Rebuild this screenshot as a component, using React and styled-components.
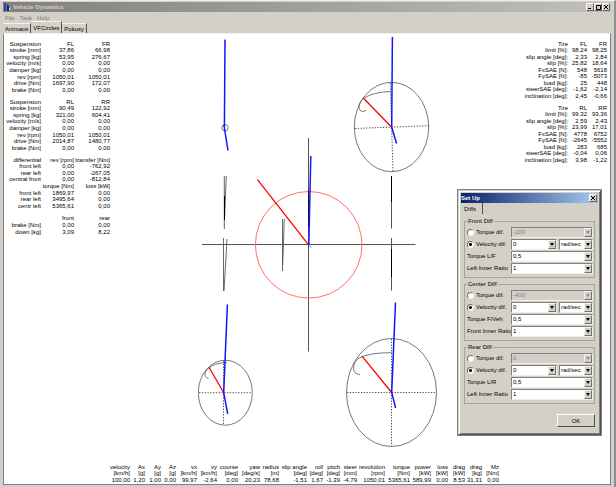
import React, { useId } from "react";
import styled, { createGlobalStyle } from "styled-components";

const FACE = "#d4d0c8";

const GlobalStyle = createGlobalStyle`
  * { box-sizing: border-box; }
  body {
    margin: 0;
    background: ${FACE};
    font-family: "Liberation Sans", Arial, sans-serif;
    font-size: 6px;
    line-height: 6px;
    color: #000;
  }
  button, input, select { font: inherit; color: inherit; margin: 0; padding: 0; }
`;

const Window = styled.div`
  position: relative;
  display: flex;
  flex-direction: column;
  min-height: 100vh;
  padding: 1px 3px 2px 3px;
  background: ${FACE};
  border-right: 2px solid #909090;
  border-top: 1px solid #f0eee8;
`;

const TitleBar = styled.header`
  display: flex;
  align-items: center;
  gap: 2px;
  height: 10px;
  padding: 0 1px;
  color: ${FACE};
  background: linear-gradient(90deg, #808080, #c0c0c0);
`;

const Title = styled.h1`
  flex: 1;
  margin: 0;
  font-size: 6px;
  font-weight: bold;
`;

const CaptionGroup = styled.div`
  display: flex;
`;

const CaptionButton = styled.button`
  display: grid;
  place-items: center;
  width: 8px;
  height: 8px;
  background: ${FACE};
  border: 1px solid;
  border-color: #fff #606060 #606060 #fff;
  svg { display: block; }
`;

const MenuBar = styled.nav`
  display: flex;
  gap: 5px;
  padding: 2px 2px 0;
  height: 9px;
`;

const MenuItem = styled.button`
  border: 0;
  background: none;
  color: #808080;
`;

const TabList = styled.div`
  display: flex;
  align-items: flex-end;
  height: 12px;
`;

const Tab = styled.button`
  height: ${(p) => (p.$active ? 12 : 10)}px;
  padding: 0 2px;
  background: ${FACE};
  border: 0;
  border-top: 1px solid #f4f2ee;
  border-right: 1px solid #505050;
`;

const Page = styled.main`
  flex: 1;
  display: grid;
  grid-template-columns: auto 1fr auto;
  grid-template-rows: 1fr auto;
  padding: 2px 3px 1px 4px;
  background: #fff;
  border: 1px solid #808080;
  border-top-color: #f4f2ee;
`;

const Column = styled.section`
  display: flex;
  flex-direction: column;
  gap: 6px;
  padding-top: 5px;
`;

const DataTable = styled.table`
  table-layout: fixed;
  border-collapse: collapse;
  width: ${(p) => p.$width}px;
  height: ${(p) => p.$height}px;
  th, td {
    padding: 0;
    font-weight: normal;
    text-align: right;
    white-space: nowrap;
    direction: rtl;
    unicode-bidi: normal;
  }
  span { direction: ltr; unicode-bidi: isolate; }
`;

const Col = styled.col`
  width: ${(p) => p.$w}px;
`;

const Drawing = styled.svg`
  display: block;
  justify-self: start;
  margin-left: 88px;
`;

const Footer = styled.footer`
  grid-column: 1 / -1;
  padding-left: 101px;
`;

const Dialog = styled.section`
  position: absolute;
  top: 189px;
  right: 13px;
  width: 143px;
  padding: 2px;
  background: ${FACE};
  border: 1px solid;
  border-color: #d4d0c8 #505050 #505050 #d4d0c8;
  box-shadow: inset 1px 1px #fff, inset -1px -1px #808080, 0 0 0 1px #808080;
`;

const DialogTitle = styled(TitleBar)`
  padding: 0 1px 0 0;
  color: #fff;
  background: linear-gradient(90deg, #0a246a, #a6caf0);
`;

const DialogTab = styled.button`
  display: block;
  height: 11px;
  width: 22px;
  padding: 0 3px;
  text-align: left;
  background: ${FACE};
  border: 0;
  border-right: 1px solid #505050;
`;

const DialogPage = styled.form`
  display: flex;
  flex-direction: column;
  gap: 3px;
  padding: 4px 3px 5px 3px;
`;

const Group = styled.fieldset`
  min-width: 0;
  margin: 0;
  padding: 1px 1px 3px 2px;
  border: 1px solid #a8a49c;
`;

const Legend = styled.legend`
  height: 7px;
  padding: 0 1px;
`;

const Row = styled.div`
  display: grid;
  grid-template-columns: 44px 1fr;
  align-items: center;
  height: 12px;
`;

const RowLabel = styled.label`
  display: flex;
  align-items: center;
  gap: 2px;
  white-space: nowrap;
`;

const Radio = styled.input`
  appearance: none;
  width: 7px;
  height: 7px;
  border: 1px solid;
  border-color: #707070 #f4f2ee #f4f2ee #707070;
  border-radius: 50%;
  background: #fff;
  &:checked { background: radial-gradient(circle, #000 1px, #fff 2px); }
`;

const Fields = styled.div`
  display: grid;
  grid-template-columns: ${(p) => (p.$split ? "46px 1fr" : "1fr")};
  gap: 2px;
`;

const ComboBox = styled.div`
  position: relative;
  height: 11px;
`;

const Select = styled.select`
  appearance: none;
  display: block;
  width: 100%;
  height: 11px;
  padding: 0 8px 0 1px;
  line-height: 8px;
  background: #fff;
  border: 1px solid;
  border-color: #808080 #f0eee8 #f0eee8 #808080;
  border-radius: 0;
  &:disabled { background: ${FACE}; color: #808080; opacity: 1; }
`;

const ComboArrow = styled.span`
  position: absolute;
  top: 1px;
  right: 1px;
  display: grid;
  place-items: center;
  width: 8px;
  height: 9px;
  background: ${FACE};
  color: ${(p) => (p.$off ? "#909090" : "#000")};
  border: 1px solid;
  border-color: #f4f2ee #707070 #707070 #f4f2ee;
  pointer-events: none;
  svg { display: block; }
`;

const OkButton = styled.button`
  align-self: flex-end;
  width: 38px;
  height: 13px;
  margin-top: 7px;
  background: ${FACE};
  border: 1px solid;
  border-color: #fff #505050 #505050 #fff;
`;

const wheelRows = ["stroke [mm]", "spring [kg]", "velocity [m/s]", "damper [kg]", "rev [rpm]", "drive [Nm]", "brake [Nm]"];
const tireRows = ["limit [%]:", "slip angle [deg]:", "slip [%]:", "FxSAE [N]:", "FySAE [N]:", "load [kg]:", "steerSAE [deg]:", "inclination [deg]:"];
const zip = (head, labels, a, b) => [head, ...labels.map((l, i) => [l, a[i], b[i]])];

const leftTables = [
  zip(["Suspension", "FL", "FR"], wheelRows,
    ["37,86", "53,95", "0,00", "0,00", "1050,01", "1697,90", "0,00"],
    ["66,98", "276,67", "0,00", "0,00", "1050,01", "172,07", "0,00"]),
  zip(["Suspension", "RL", "RR"], wheelRows,
    ["90,49", "321,00", "0,00", "0,00", "1050,01", "2014,87", "0,00"],
    ["122,92", "604,41", "0,00", "0,00", "1050,01", "1480,77", "0,00"]),
  [
    ["differential", "rev [rpm]", "transfer [Nm]"],
    ["front left", "0,00", "-762,92"],
    ["rear left", "0,00", "-267,05"],
    ["central front", "0,00", "-812,84"],
    ["", "torque [Nm]", "loss [kW]"],
    ["front left", "1869,97", "0,00"],
    ["rear left", "3495,64", "0,00"],
    ["centr left", "5365,61", "0,00"],
  ],
  [["", "front", "rear"], ["brake [Nm]", "0,00", "0,00"], ["down [kg]", "3,09", "8,22"]],
];

const rightTables = [
  zip(["Tire", "FL", "FR"], tireRows,
    ["98,24", "2,33", "25,82", "548", "-85", "25", "-1,62", "2,45"],
    ["98,25", "2,84", "18,64", "5618", "-5073", "448", "-2,14", "-0,66"]),
  zip(["Tire", "RL", "RR"], tireRows,
    ["99,32", "2,59", "23,99", "4778", "-2645", "283", "-0,04", "3,98"],
    ["93,36", "2,43", "17,01", "6752", "-5552", "685", "0,06", "-1,22"]),
];

const summary = [
  ["velocity", "[km/h]", "100,00", 21], ["Ax", "[g]", "1,20", 15], ["Ay", "[g]", "1,00", 16],
  ["Az", "[g]", "0,00", 15], ["vx", "[km/h]", "99,97", 21], ["vy", "[km/h]", "-2,64", 20],
  ["course", "[deg]", "0,00", 21], ["yaw", "[deg/s]", "20,23", 22], ["radius", "[m]", "78,68", 19],
  ["slip angle", "[deg]", "-1,51", 28], ["roll", "[deg]", "1,67", 16], ["pitch", "[deg]", "-1,39", 17],
  ["steer", "[mm]", "-4,79", 17], ["revolution", "[rpm]", "1050,01", 28], ["torque", "[Nm]", "5365,61", 25],
  ["power", "[kW]", "589,99", 21], ["loss", "[kW]", "0,00", 17], ["drag", "[kW]", "8,53", 17],
  ["drag", "[kg]", "31,31", 17], ["Mz", "[Nm]", "0,00", 17],
];

const diffs = [
  { name: "Front Diff", torque: "-100", split: "Torque L/F", inner: "Left Inner Ratio" },
  { name: "Center Diff", torque: "-400", split: "Torque F/Veh", inner: "Front Inner Ratio" },
  { name: "Rear Diff", torque: "0", split: "Torque L/R", inner: "Left Inner Ratio" },
];

function Table({ rows, widths, height }) {
  const [head, ...body] = rows;
  return (
    <DataTable $width={widths.reduce((a, b) => a + b)} $height={height}>
      <colgroup>{widths.map((w, i) => <Col key={i} $w={w} />)}</colgroup>
      <thead>
        <tr>{head.map((c, i) => <th key={i} scope="col"><span>{c}</span></th>)}</tr>
      </thead>
      <tbody>
        {body.map((r, i) => (
          <tr key={i}>{r.map((c, j) => <td key={j}><span>{c}</span></td>)}</tr>
        ))}
      </tbody>
    </DataTable>
  );
}

function Combo({ value, id, label, disabled }) {
  return (
    <ComboBox>
      <Select id={id} aria-label={label} disabled={disabled} defaultValue={value}>
        <option>{value}</option>
      </Select>
      <ComboArrow $off={disabled}>
        <svg width="4" height="3" viewBox="0 0 4 3" aria-hidden="true"><path d="M0 0h4L2 3z" fill="currentColor" /></svg>
      </ComboArrow>
    </ComboBox>
  );
}

function DiffGroup({ name, torque, split, inner }) {
  const id = useId();
  return (
    <Group>
      <Legend>{name}</Legend>
      <Row>
        <RowLabel><Radio type="radio" name={id} />Torque dif.</RowLabel>
        <Fields><Combo value={torque} label="Torque dif." disabled /></Fields>
      </Row>
      <Row>
        <RowLabel><Radio type="radio" name={id} defaultChecked />Velocity dif.</RowLabel>
        <Fields $split>
          <Combo value="0" label="Velocity dif." />
          <Combo value="rad/sec" label="Velocity unit" />
        </Fields>
      </Row>
      <Row>
        <RowLabel htmlFor={id + "s"}>{split}</RowLabel>
        <Fields><Combo id={id + "s"} value="0,5" /></Fields>
      </Row>
      <Row>
        <RowLabel htmlFor={id + "i"}>{inner}</RowLabel>
        <Fields><Combo id={id + "i"} value="1" /></Fields>
      </Row>
    </Group>
  );
}

const CloseIcon = () => (
  <svg width="4" height="4" viewBox="0 0 4 4" aria-hidden="true"><path d="M0 0l4 4M4 0L0 4" stroke="#000" /></svg>
);

function WheelPlot() {
  return (
    <Drawing width="240" height="412" viewBox="198 36 240 412" fill="none" role="img" aria-label="Wheel force circles">
      <g stroke="#555" strokeWidth="0.8">
        <circle cx="225" cy="127.7" r="3.2" />
        <ellipse cx="391.5" cy="127" rx="37.2" ry="44.7" />
        <ellipse cx="225.3" cy="392.7" rx="27" ry="32.5" />
        <ellipse cx="391.5" cy="392.5" rx="45" ry="54" />
        <path d="M390.5 91.5Q374 92 364 98C358 102 357 111 363 111.5L366 110.5" />
        <path d="M227 362.5Q215 363 209.5 367.5C204 371 203 377 208.5 378.5" />
        <path d="M391.7 352.7Q370 352.5 359 358C352 363 351 374 360 374.5" />
      </g>
      <g stroke="#222" strokeWidth="0.8" strokeDasharray="1.3 1.5">
        <path d="M355 128.5L429 125.7M390.3 83L393 171.5" />
        <path d="M199 392.7H252M223.5 361V425" />
        <path d="M347 392.5H436.5M391.5 339V446" />
      </g>
      <g stroke="#555">
        <path d="M202 244.5H415.5M308.5 138V351.5" />
        <path d="M224.3 176V229M226.3 176L224.5 219M223.5 238V291M227 239L224 291" strokeWidth="0.9" />
        <path d="M282.5 219V271M284.3 219L282.7 265" strokeWidth="0.9" />
        <path d="M391.5 176V228.5M391.5 238V290.5" />
        <path d="M224.5 196V220M391.5 176V202M391.5 249V277" stroke="#000" />
      </g>
      <circle cx="308.7" cy="244.8" r="53.3" stroke="#ff7070" />
      <g stroke="#f00" strokeWidth="1.3">
        <path d="M257.5 179.7L308.6 244.8M363.3 98L391.7 127.3M209.2 367.5L223.7 392.7M362 356.2L391.7 392.5" />
      </g>
      <path d="M308.5 245L311.5 247.5" stroke="#555" strokeWidth="0.7" />
      <g stroke="#1414ff" strokeWidth="1.5">
        <path d="M225 39.5L224.4 128L228 150.5" />
        <path d="M392.4 37L391.7 127.3L396.6 143.5" />
        <path d="M310.8 156L308.8 244.8" />
        <path d="M227.4 304.5L223.7 392.7L227.7 413.8" />
        <path d="M395.5 302.5L391.7 392.5L395.6 408" />
      </g>
      <path d="M308.5 190V226" stroke="#000" strokeWidth="0.7" />
      <path d="M223.5 127v-1.5" stroke="#f00" />
    </Drawing>
  );
}

export default function App() {
  return (
    <>
      <GlobalStyle />
      <Window>
        <TitleBar>
          <svg width="7" height="8" viewBox="0 0 7 8" aria-hidden="true">
            <path d="M0 0h2v8H0z" fill="#2848a0" /><path d="M3 1l2 2v5H3z" fill="#10206c" /><path d="M5 4l2 3H5z" fill="#e8e8f0" />
          </svg>
          <Title>Vehicle Dynamics</Title>
          <CaptionGroup>
            <CaptionButton aria-label="Minimize">
              <svg width="4" height="4" viewBox="0 0 4 4"><path d="M0 3.5h3" stroke="#000" /></svg>
            </CaptionButton>
            <CaptionButton aria-label="Maximize">
              <svg width="5" height="5" viewBox="0 0 5 5"><path d="M.5 .5h4v4h-4z" stroke="#000" fill="none" /></svg>
            </CaptionButton>
            <CaptionButton aria-label="Close"><CloseIcon /></CaptionButton>
          </CaptionGroup>
        </TitleBar>
        <MenuBar>
          <MenuItem>File</MenuItem>
          <MenuItem>Task</MenuItem>
          <MenuItem>Help</MenuItem>
        </MenuBar>
        <TabList role="tablist">
          <Tab role="tab">Animace</Tab>
          <Tab role="tab" $active aria-selected="true">VFCircles</Tab>
          <Tab role="tab">Pokusy</Tab>
        </TabList>
        <Page>
          <Column>
            {leftTables.map((rows, i) => (
              <Table key={i} rows={rows} widths={[33, 33, 36]} height={rows.length === 8 ? 52 : 20} />
            ))}
          </Column>
          <WheelPlot />
          <Column>
            {rightTables.map((rows, i) => (
              <Table key={i} rows={rows} widths={[44, 19, 20]} height={58} />
            ))}
          </Column>
          <Footer>
            <Table rows={[0, 1, 2].map((k) => summary.map((s) => s[k]))} widths={summary.map((s) => s[3])} height={19} />
          </Footer>
        </Page>
        <Dialog role="dialog" aria-label="Set Up">
          <DialogTitle as="div">
            <Title as="h2">Set Up</Title>
            <CaptionButton aria-label="Close"><CloseIcon /></CaptionButton>
          </DialogTitle>
          <DialogTab role="tab" aria-selected="true">Diffs</DialogTab>
          <DialogPage>
            {diffs.map((d) => <DiffGroup key={d.name} {...d} />)}
            <OkButton type="button">OK</OkButton>
          </DialogPage>
        </Dialog>
      </Window>
    </>
  );
}
